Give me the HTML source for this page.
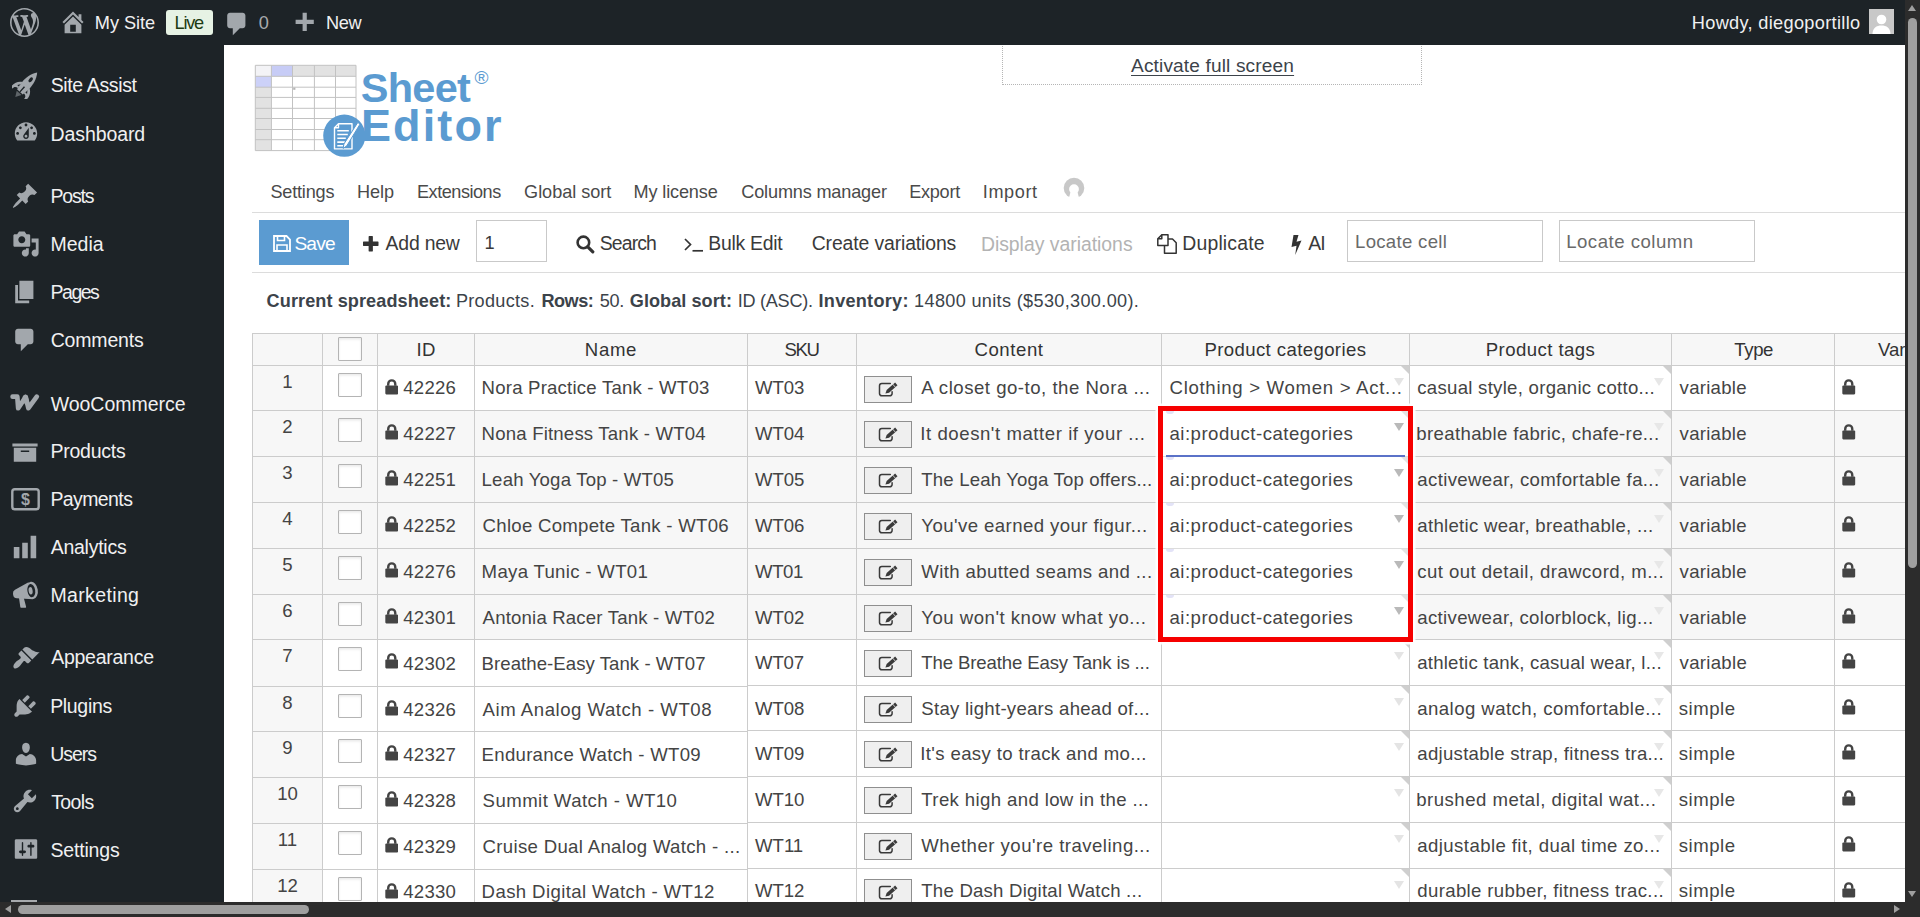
<!DOCTYPE html><html lang="en"><head><meta charset="utf-8"><title>Sheet Editor - Products</title><style>

*{box-sizing:border-box}
html,body{margin:0;padding:0}
body{width:1920px;height:917px;overflow:hidden;position:relative;background:#fff;font-family:"Liberation Sans",sans-serif;color:#444}
.ic{position:absolute;display:block}
.abs{position:absolute;white-space:nowrap}
a.abs{color:inherit}
#adminbar{position:absolute;left:0;top:0;width:1905px;height:45px;background:#1d2327;color:#f0f0f1}
#sidebar{position:absolute;left:0;top:45px;width:224px;height:857px;background:#1d2327;color:#f0f0f1;overflow:hidden}
#sidebar ul{list-style:none;margin:0;padding:0}
#sidebar li{display:block}
#main{position:absolute;left:224px;top:45px;width:1681px;height:857px;background:#fff;overflow:hidden}
#vs{position:absolute;left:1905px;top:0;width:15px;height:917px;background:#2c2c2c}
#hs{position:absolute;left:0;top:902px;width:1905px;height:15px;background:#2c2c2c}
#vs i,#hs i{display:block}


.c{position:absolute;border-left:1px solid #cccccc;border-top:1px solid #cccccc;overflow:hidden;white-space:nowrap}
.c.h{background:#f7f7f7}
.cb{position:absolute;display:block;width:24px;height:23.500px;border:1px solid #b4b4b4;background:#fff;border-radius:1px;box-shadow:inset 0 1.500px 2.500px rgba(0,0,0,.09)}
.btn{position:absolute;display:block;width:48px;height:27px;border:1px solid #8f8f8f;background:#efefef}
.dd{position:absolute;right:5.500px;top:11.500px;width:0;height:0;border-left:5.700px solid transparent;border-right:5.700px solid transparent;border-top:8.800px solid #ccc}
.lav{position:absolute;left:4px;top:0;width:8px;height:3px;background:#e3e3f7;border-radius:0 0 4px 4px}
.cn{position:absolute;right:0;top:0;width:0;height:0;border-left:8px solid transparent;border-top:8px solid #cfcfcf}

</style></head><body>
<div id="adminbar"><svg class="ic" style="left:9.5px;top:7.5px" width="29" height="29" viewBox="0 0 20 20" fill="#a2a7ac"><path d="M20 10c0-5.51-4.49-10-10-10C4.48 0 0 4.49 0 10c0 5.52 4.48 10 10 10 5.51 0 10-4.48 10-10zM7.78 15.37L4.37 6.22c.55-.02 1.17-.08 1.17-.08.5-.06.44-1.13-.06-1.11 0 0-1.45.11-2.37.11-.18 0-.37 0-.58-.01C4.12 2.69 6.87 1.11 10 1.11c2.33 0 4.45.87 6.05 2.34-.68-.11-1.65.39-1.65 1.58 0 .74.45 1.36.9 2.1.35.61.55 1.36.55 2.46 0 1.49-1.4 5-1.4 5l-3.03-8.37c.54-.02.82-.17.82-.17.5-.05.44-1.25-.06-1.22 0 0-1.44.12-2.38.12-.87 0-2.33-.12-2.33-.12-.5-.03-.56 1.2-.06 1.22l.92.08 1.26 3.41zM17.41 10c.24-.64.74-1.87.43-4.25.7 1.29 1.05 2.71 1.05 4.25 0 3.29-1.73 6.24-4.4 7.78.97-2.59 1.94-5.2 2.92-7.78zM6.1 18.09C3.12 16.65 1.11 13.53 1.11 10c0-1.3.23-2.48.72-3.59C3.25 10.3 4.67 14.2 6.1 18.09zm4.03-6.63l2.58 6.98c-.86.29-1.76.45-2.71.45-.79 0-1.57-.11-2.29-.33.81-2.38 1.62-4.74 2.42-7.1z"/></svg><svg class="ic" style="left:58.5px;top:8px" width="28" height="28" viewBox="0 0 20 20" fill="#a2a7ac"><path d="M16 8.5l1.53 1.53-1.06 1.06L10 4.62l-6.47 6.47-1.06-1.06L10 2.5l4 4v-2h2v4zm-6-2.46l6 5.99V18H4v-5.97zM12 17v-5H8v5h4z"/></svg><span class="abs" style="left:94.80px;top:13.79px;font-size:18.2px;line-height:18.2px;letter-spacing:-0.054px">My Site</span><span class="abs" style="left:166px;top:10px;height:25px;width:47px;background:#e6f2e4;border-radius:3px"></span><span class="abs" style="left:174.60px;top:13.79px;font-size:18.2px;line-height:18.2px;color:#1d3b12;letter-spacing:-1.283px">Live</span><svg class="ic" style="left:222.5px;top:10px" width="28" height="28" viewBox="0 0 20 20" fill="#a2a7ac"><path d="M5 2h9c1.1 0 2 .9 2 2v7c0 1.1-.9 2-2 2h-2l-5 5v-5H5c-1.1 0-2-.9-2-2V4c0-1.1.9-2 2-2z"/></svg><span class="abs" style="left:258.80px;top:13.79px;font-size:18.2px;line-height:18.2px;color:#a7aaad">0</span><svg class="ic" style="left:289.5px;top:9.5px" width="28" height="28" viewBox="0 0 20 20" fill="#a2a7ac"><path d="M17 7v3h-5v5H9v-5H4V7h5V2h3v5h5z"/></svg><span class="abs" style="left:326.00px;top:13.79px;font-size:18.2px;line-height:18.2px;letter-spacing:-0.375px">New</span><span class="abs" style="left:1691.80px;top:13.79px;font-size:18.2px;line-height:18.2px;letter-spacing:0.310px">Howdy, diegoportillo</span><svg class="ic" style="left:1869px;top:9px" width="25" height="25" viewBox="0 0 25 25"><rect width="25" height="25" fill="#c8c8c8"/><circle cx="12.500" cy="10.500" r="4.800" fill="#fff"/><path d="M3.500 25c0-6 4-8.500 9-8.500s9 2.500 9 8.500z" fill="#fff"/></svg></div>
<div id="sidebar"><ul><li><svg class="ic" style="left:11.5px;top:26.1px" width="28" height="28" viewBox="-14 -14 28 28" fill="#a2a7ac"><g transform="translate(.6,-.6) rotate(41.800) scale(1.060)"><path d="M0-15C3.500-10.500 5-4 4.600 2L3.600 9.500h-7.200L-4.600 2C-5-4-3.500-10.500 0-15z"/><path d="M-4.300 .8C-8.600 3-10.200 7.800-9.400 12.600l2-.8c-.2-2.300 1.200-3.700 3.800-3.800z"/><path d="M4.300 .8C8.600 3 10.200 7.800 9.400 12.600l-2-.8c.2-2.300-1.200-3.700-3.800-3.800z"/><ellipse cx="0" cy="-5.800" rx="1.500" ry="2.700" fill="#1d2327"/><path d="M0 3v6.500" stroke="#1d2327" stroke-width="1.300"/><path d="M-6.200 6.200l1.900-2.600v3z M6.200 6.200l-1.900-2.600v3z" fill="#1d2327"/><path d="M-3 10.600h6L0 16z" opacity=".5"/></g></svg><span class="abs" style="left:50.70px;top:31.09px;font-size:19.5px;line-height:19.5px;letter-spacing:-0.371px">Site Assist</span></li><li><svg class="ic" style="left:11.8px;top:73.2px" width="28" height="28" viewBox="0 0 20 20" fill="#a2a7ac"><path d="M3.76 16h12.48c1.1-1.37 1.76-3.11 1.76-5 0-4.42-3.58-8-8-8s-8 3.58-8 8c0 1.89.66 3.63 1.76 5zM10 4c.55 0 1 .45 1 1s-.45 1-1 1-1-.45-1-1 .45-1 1-1zM6 6c.55 0 1 .45 1 1s-.45 1-1 1-1-.45-1-1 .45-1 1-1zm8 0c.55 0 1 .45 1 1s-.45 1-1 1-1-.45-1-1 .45-1 1-1zm-5.37 5.55L12 7v6c0 1.1-.9 2-2 2s-2-.9-2-2c0-.57.24-1.08.63-1.450zM4 10c.55 0 1 .45 1 1s-.45 1-1 1-1-.45-1-1 .45-1 1-1zm12 0c.55 0 1 .45 1 1s-.45 1-1 1-1-.45-1-1 .45-1 1-1zm-5 3c0-.55-.45-1-1-1s-1 .45-1 1 .45 1 1 1 1-.45 1-1z"/></svg><span class="abs" style="left:50.50px;top:80.49px;font-size:19.5px;line-height:19.5px;letter-spacing:-0.094px">Dashboard</span></li><li><svg class="ic" style="left:11.1px;top:136.8px" width="28" height="28" viewBox="0 0 20 20" fill="#a2a7ac"><path d="M10.44 3.02l1.82-1.82 6.36 6.35-1.83 1.82c-1.05-.68-2.48-.57-3.41.36l-.75.75c-.92.93-1.04 2.35-.35 3.41l-1.83 1.82-2.41-2.41-2.8 2.79c-.42.42-3.38 2.71-3.8 2.29s1.86-3.39 2.28-3.81l2.79-2.79L4.1 9.36l1.83-1.82c1.05.69 2.48.57 3.4-.36l.75-.75c.93-.92 1.05-2.35.36-3.41z"/></svg><span class="abs" style="left:50.50px;top:142.19px;font-size:19.5px;line-height:19.5px;letter-spacing:-1.180px">Posts</span></li><li><svg class="ic" style="left:11.6px;top:184.8px" width="28" height="28" viewBox="0 0 20 20" fill="#a2a7ac"><path d="M13 11V4c0-.55-.45-1-1-1h-1.67L9 1H5L3.67 3H2c-.55 0-1 .45-1 1v7c0 .55.45 1 1 1h10c.55 0 1-.45 1-1zM7 4.5c1.38 0 2.5 1.12 2.5 2.5S8.38 9.5 7 9.5 4.5 8.38 4.5 7 5.62 4.5 7 4.5zM14 6h5v10.5c0 1.38-1.12 2.5-2.5 2.5S14 17.88 14 16.5s1.12-2.5 2.5-2.5c.17 0 .34.02.5.05V9h-3V6zm-4 8.05V13h2v3.500c0 1.38-1.12 2.5-2.5 2.5S7 17.88 7 16.5 8.12 14 9.5 14c.17 0 .34.02.5.05z"/></svg><span class="abs" style="left:50.50px;top:189.89px;font-size:19.5px;line-height:19.5px;letter-spacing:-0.016px">Media</span></li><li><svg class="ic" style="left:11.0px;top:233.4px" width="28" height="28" viewBox="0 0 20 20" fill="#a2a7ac"><path d="M6 15V2h10v13H6zm-1 1h8v2H3V5h2v11z"/></svg><span class="abs" style="left:50.50px;top:237.59px;font-size:19.5px;line-height:19.5px;letter-spacing:-1.485px">Pages</span></li><li><svg class="ic" style="left:10.9px;top:281.1px" width="28" height="28" viewBox="0 0 20 20" fill="#a2a7ac"><path d="M5 2h9c1.1 0 2 .9 2 2v7c0 1.1-.9 2-2 2h-2l-5 5v-5H5c-1.1 0-2-.9-2-2V4c0-1.1.9-2 2-2z"/></svg><span class="abs" style="left:50.70px;top:286.29px;font-size:19.5px;line-height:19.5px;letter-spacing:-0.175px">Comments</span></li><li><svg class="ic" style="left:8px;top:345px" width="34" height="26" viewBox="8 390 34 26" fill="none" stroke="#a2a7ac" stroke-width="4.700" stroke-linejoin="round" stroke-linecap="round"><path d="M12.600 396.700h4.700l.9 11.500 7.500-11.300 2.700 11.300 8.400-11.500"/><path d="M25.300 397.500l1.300 4.500" stroke-width="5.200"/></svg><span class="abs" style="left:50.70px;top:350.49px;font-size:19.5px;line-height:19.5px;letter-spacing:-0.025px">WooCommerce</span></li><li><svg class="ic" style="left:11.0px;top:392.5px" width="28" height="28" viewBox="0 0 20 20" fill="#a2a7ac"><path d="M19 4v2H1V4h18zM2 7h16v10H2V7zm11 3V9H7v1h6z"/></svg><span class="abs" style="left:50.40px;top:396.59px;font-size:19.5px;line-height:19.5px;letter-spacing:-0.229px">Products</span></li><li><svg class="ic" style="left:10.5px;top:442.5px" width="29" height="23" viewBox="0 0 29 23"><rect x="1.300" y="1.300" width="26.400" height="20" rx="2.500" fill="none" stroke="#a2a7ac" stroke-width="2.400"/><text x="14.500" y="16.800" font-family="Liberation Sans, sans-serif" font-weight="bold" font-size="16" text-anchor="middle" fill="#a2a7ac">$</text></svg><span class="abs" style="left:50.40px;top:445.29px;font-size:19.5px;line-height:19.5px;letter-spacing:-0.593px">Payments</span></li><li><svg class="ic" style="left:11.1px;top:487.8px" width="28" height="28" viewBox="0 0 20 20" fill="#a2a7ac"><path d="M18 18V2h-4v16h4zm-6 0V7H8v11h4zm-6 0v-8H2v8h4z"/></svg><span class="abs" style="left:50.70px;top:493.39px;font-size:19.5px;line-height:19.5px;letter-spacing:-0.260px">Analytics</span></li><li><svg class="ic" style="left:5px;top:530px" width="40" height="40" viewBox="5 575 40 40" fill="#a2a7ac"><path d="M19 598l1.300 9.100a.8.800 0 0 0 .8.700h4.200a.8.800 0 0 0 .8-1l-2.300-8.800z"/><path d="M28.500 582.300L15 589.800a4 4 0 0 0-2 4.200l.3 1.600a3.500 3.500 0 0 0 3.400 2.700l16.300.9z"/><ellipse cx="32.100" cy="590.400" rx="5.700" ry="8.700" transform="rotate(-9 32.100 590.400)"/><ellipse cx="31.300" cy="590.600" rx="3.900" ry="6.600" transform="rotate(-9 31.300 590.600)" fill="#1d2327"/><ellipse cx="30.600" cy="590.800" rx="2" ry="3.700" transform="rotate(-9 30.600 590.800)"/></svg><span class="abs" style="left:50.40px;top:541.49px;font-size:19.5px;line-height:19.5px;letter-spacing:0.366px">Marketing</span></li><li><svg class="ic" style="left:11.6px;top:598.9px" width="28" height="28" viewBox="0 0 20 20" fill="#a2a7ac"><path d="M14.48 11.06L7.41 3.99l1.5-1.5c.5-.56 2.3-.47 3.51.32 1.21.8 1.43 1.28 2.91 2.1 1.18.64 2.45 1.26 4.45.85zm-.71.71L6.7 4.7 4.93 6.47c-.39.39-.39 1.02 0 1.41l1.06 1.06c.39.39.39 1.03 0 1.42-.6.6-1.43 1.11-2.21 1.69-.35.26-.7.53-1.01.84C1.43 14.23.4 16.08 1.4 17.070c.99 1 2.84-.03 4.18-1.36.31-.31.58-.66.85-1.02.57-.78 1.08-1.61 1.69-2.21.39-.39 1.02-.39 1.41 0l1.060 1.060c.39.39 1.02.39 1.41 0z"/></svg><span class="abs" style="left:51.20px;top:603.19px;font-size:19.5px;line-height:19.5px;letter-spacing:-0.258px">Appearance</span></li><li><svg class="ic" style="left:11.1px;top:647.2px" width="28" height="28" viewBox="0 0 20 20" fill="#a2a7ac"><path d="M13.11 4.36L9.87 7.6 8 5.73l3.240-3.240c.35-.34 1.05-.2 1.56.32.52.51.66 1.21.31 1.55zm-8 1.77l.91-1.12 9.01 9.01-1.19.84c-.71.71-2.63 1.16-3.82 1.16H6.14L4.9 17.26c-.59.59-1.54.59-2.12 0-.59-.58-.59-1.53 0-2.12l1.24-1.24v-3.88c0-1.13.4-3.19 1.09-3.890zm7.26 3.97l3.24-3.24c.34-.35 1.04-.21 1.55.31.52.51.66 1.21.31 1.55l-3.24 3.25z"/></svg><span class="abs" style="left:50.20px;top:652.49px;font-size:19.5px;line-height:19.5px;letter-spacing:-0.334px">Plugins</span></li><li><svg class="ic" style="left:11.6px;top:694.8px" width="28" height="28" viewBox="0 0 20 20" fill="#a2a7ac"><path d="M10 9.25c-2.27 0-2.73-3.44-2.73-3.44C7 4.02 7.82 2 9.97 2c2.16 0 2.98 2.02 2.71 3.81 0 0-.41 3.44-2.68 3.44zm0 2.57L12.72 10c2.39 0 4.52 2.33 4.52 4.53v2.49s-3.65 1.13-7.24 1.13c-3.65 0-7.24-1.13-7.24-1.13v-2.49c0-2.25 1.94-4.48 4.47-4.48z"/></svg><span class="abs" style="left:50.20px;top:700.39px;font-size:19.5px;line-height:19.5px;letter-spacing:-1.043px">Users</span></li><li><svg class="ic" style="left:11.4px;top:742.4px" width="28" height="28" viewBox="0 0 20 20" fill="#a2a7ac"><path d="M16.68 9.77c-1.34 1.34-3.3 1.67-4.95.99l-5.41 6.52c-.99.99-2.59.99-3.58 0s-.99-2.59 0-3.57l6.52-5.42c-.68-1.65-.35-3.61.99-4.95 1.28-1.28 3.12-1.62 4.72-1.06l-2.89 2.89 2.82 2.82 2.86-2.87c.53 1.58.18 3.39-1.08 4.650zM3.81 16.21c.4.39 1.04.39 1.43 0 .4-.4.4-1.04 0-1.43-.39-.4-1.03-.4-1.43 0-.39.39-.39 1.03 0 1.43z"/></svg><span class="abs" style="left:51.20px;top:748.39px;font-size:19.5px;line-height:19.5px;letter-spacing:-0.593px">Tools</span></li><li><svg class="ic" style="left:11.9px;top:790.1px" width="28" height="28" viewBox="0 0 20 20" fill="#a2a7ac"><path d="M18 16V4c0-.55-.45-1-1-1H3c-.55 0-1 .45-1 1v12c0 .55.45 1 1 1h14c.55 0 1-.45 1-1zM8 11h1c.55 0 1 .45 1 1s-.45 1-1 1H8v1.5c0 .28-.22.5-.5.5s-.5-.22-.5-.5V13H6c-.55 0-1-.45-1-1s.45-1 1-1h1V5.5c0-.28.22-.5.5-.5s.5.22.5.5V11zm5-2h-1c-.55 0-1-.45-1-1s.45-1 1-1h1V5.5c0-.28.22-.5.5-.5s.5.22.5.5V7h1c.55 0 1 .45 1 1s-.45 1-1 1h-1v5.5c0 .28-.22.5-.5.5s-.5-.22-.5-.5V9z"/></svg><span class="abs" style="left:50.40px;top:795.59px;font-size:19.5px;line-height:19.5px;letter-spacing:-0.158px">Settings</span></li></ul><div class="abs" style="left:11.300px;top:854.500px;width:25.500px;height:2.500px;background:#a7aaad"></div></div>
<div id="main">
<svg class="ic" style="left:26px;top:15px" width="120" height="100" viewBox="0 0 120 100" stroke="#c2c2c2" stroke-width="1"><rect x="5.3" y="5.3" width="100.70" height="85.30" fill="#fff" stroke="none"/><rect x="5.3" y="5.3" width="100.70" height="11.00" fill="#e2e2e2" stroke="none"/><rect x="5.3" y="5.3" width="16.10" height="85.30" fill="#e2e2e2" stroke="none"/><rect x="5.3" y="5.3" width="16.10" height="11.00" fill="#f3f3f6" stroke="none"/><rect x="21.4" y="5.3" width="21.10" height="11.00" fill="#c7ccf6" stroke="none"/><rect x="5.3" y="16.3" width="16.10" height="10.90" fill="#ccd1f8" stroke="none"/><line x1="5.3" y1="5.3" x2="5.3" y2="90.6"/><line x1="21.4" y1="5.3" x2="21.4" y2="90.6"/><line x1="42.5" y1="5.3" x2="42.5" y2="90.6"/><line x1="64.4" y1="5.3" x2="64.4" y2="90.6"/><line x1="85.5" y1="5.3" x2="85.5" y2="90.6"/><line x1="106.0" y1="5.3" x2="106.0" y2="90.6"/><line x1="5.3" y1="5.3" x2="106.0" y2="5.3"/><line x1="5.3" y1="16.3" x2="106.0" y2="16.3"/><line x1="5.3" y1="27.2" x2="106.0" y2="27.2"/><line x1="5.3" y1="37.4" x2="106.0" y2="37.4"/><line x1="5.3" y1="48.3" x2="106.0" y2="48.3"/><line x1="5.3" y1="58.5" x2="106.0" y2="58.5"/><line x1="5.3" y1="69.5" x2="106.0" y2="69.5"/><line x1="5.3" y1="79.7" x2="106.0" y2="79.7"/><line x1="5.3" y1="90.6" x2="106.0" y2="90.6"/><rect x="43.2" y="27.6" width="2.200" height="2.200" fill="#b5b5b5" stroke="none"/><circle cx="94.3" cy="75.7" r="21.1" fill="#5b9bd1" stroke="none"/><g transform="translate(94.3,76.3)" fill="none" stroke="#fff" stroke-width="1.400" stroke-linejoin="round"><path d="M-5.800 -12.600h13.500v25.200h-17.500v-21.200z" fill="#5b9bd1"/><path d="M-5.800 -12.600v4h-4"/><path d="M-7 -5.600h11.500M-7 -1.800h10.500M-7 2h8.500M-7 5.800h7.500M-7 9.400h6" stroke-width="1.600"/><path d="M13.500 -13.800l2.300 1.500-13.300 21.800-3.600 2.600.7-4.400z" fill="#fff" stroke="#5b9bd1" stroke-width="1"/></g></svg><span class="abs" style="left:136.80px;top:22.37px;font-size:41.5px;line-height:41.5px;color:#5b9bd1;font-weight:bold;letter-spacing:-0.748px">Sheet</span><span class="abs" style="left:137.00px;top:58.01px;font-size:45px;line-height:45px;color:#5b9bd1;font-weight:bold;letter-spacing:2.104px">Editor</span><span class="abs" style="left:250.40px;top:23.32px;font-size:19px;line-height:19px;color:#5b9bd1;letter-spacing:0.000px">®</span><div class="abs" style="left:778.0px;top:-5.0px;width:419.5px;height:44.5px;border:1px dotted #b5b5b5"></div><a class="abs" style="left:907.00px;top:11.03px;font-size:19.1px;line-height:19.1px;color:#3c434a;letter-spacing:0.141px;text-decoration:underline;text-decoration-thickness:1px;text-underline-offset:2.500px">Activate full screen</a><span class="abs" style="left:46.50px;top:137.68px;font-size:18.1px;line-height:18.1px;color:#4a4a4a;letter-spacing:-0.204px">Settings</span><span class="abs" style="left:133.00px;top:137.68px;font-size:18.1px;line-height:18.1px;color:#4a4a4a;letter-spacing:-0.050px">Help</span><span class="abs" style="left:193.00px;top:137.68px;font-size:18.1px;line-height:18.1px;color:#4a4a4a;letter-spacing:-0.473px">Extensions</span><span class="abs" style="left:300.10px;top:137.68px;font-size:18.1px;line-height:18.1px;color:#4a4a4a;letter-spacing:-0.036px">Global sort</span><span class="abs" style="left:409.60px;top:137.68px;font-size:18.1px;line-height:18.1px;color:#4a4a4a;letter-spacing:-0.145px">My license</span><span class="abs" style="left:517.30px;top:137.68px;font-size:18.1px;line-height:18.1px;color:#4a4a4a;letter-spacing:-0.158px">Columns manager</span><span class="abs" style="left:685.20px;top:137.68px;font-size:18.1px;line-height:18.1px;color:#4a4a4a;letter-spacing:-0.253px">Export</span><span class="abs" style="left:758.80px;top:137.68px;font-size:18.1px;line-height:18.1px;color:#4a4a4a;letter-spacing:0.590px">Import</span><svg class="ic" style="left:838.5px;top:131.6px" width="22" height="22" viewBox="-11 -11 22 22"><clipPath id="spc"><rect x="-11" y="-11" width="22" height="19.800"/></clipPath><circle r="10.300" fill="#c8c8c8" clip-path="url(#spc)"/><circle cy="1.100" r="4.900" fill="#fff"/><path d="M-3.600 4.200L-5.200 11h10.400L3.600 4.200z" fill="#fff"/></svg><div class="abs" style="left:27.5px;top:167.0px;width:1654.0px;height:1.0px;background:#dcdcdc"></div><div class="abs" style="left:27.5px;top:227.0px;width:1654.0px;height:1.0px;background:#dcdcdc"></div><div class="abs" style="left:35.0px;top:175.0px;width:90.0px;height:44.8px;background:#5b9bd1"></div><svg class="ic" style="left:48.5px;top:190px" width="18" height="17" viewBox="0 0 18 17" fill="none" stroke="#fff" stroke-width="1.800"><path d="M1 1h12.500l3.500 3.500v11.500h-16z"/><path d="M4.500 1v4.500h7v-4.500" stroke-width="1.600"/><path d="M4 16v-6h10v6" stroke-width="1.600"/></svg><span class="abs" style="left:70.40px;top:189.35px;font-size:19.2px;line-height:19.2px;color:#fff;letter-spacing:-0.854px">Save</span><svg class="ic" style="left:139.3px;top:191px" width="15.500" height="15.500" viewBox="0 0 16 16" fill="#333"><path d="M5.800 .5a.5.500 0 0 1 .5-.5h3.400a.5.500 0 0 1 .5.500v5.300h5.300a.5.500 0 0 1 .5.500v3.400a.5.500 0 0 1-.5.500h-5.300v5.300a.5.500 0 0 1-.5.500h-3.400a.5.500 0 0 1-.5-.5v-5.300h-5.300a.5.500 0 0 1-.5-.5v-3.400a.5.500 0 0 1 .5-.5h5.300z"/></svg><span class="abs" style="left:161.60px;top:189.18px;font-size:19.4px;line-height:19.4px;color:#3a3a3a;letter-spacing:-0.210px">Add new</span><div class="abs" style="left:252.0px;top:175.4px;width:70.6px;height:41.3px;border:1px solid #c9c9c9;background:#fff"></div><span class="abs" style="left:260.40px;top:189.09px;font-size:18.2px;line-height:18.2px;color:#3a3a3a">1</span><svg class="ic" style="left:351.5px;top:190px" width="19" height="19" viewBox="0 0 19 19" fill="none" stroke="#333" stroke-width="2.600"><circle cx="7.400" cy="7.400" r="5.800"/><path d="M11.800 11.800l5 5" stroke-width="3.200" stroke-linecap="round"/></svg><span class="abs" style="left:375.80px;top:189.18px;font-size:19.4px;line-height:19.4px;color:#3a3a3a;letter-spacing:-0.891px">Search</span><svg class="ic" style="left:460px;top:193px" width="20" height="14" viewBox="0 0 20 14" fill="none" stroke="#333" stroke-width="1.700"><path d="M1 1l5.500 5.500-5.500 5.500"/><path d="M8.500 12.800h10.500"/></svg><span class="abs" style="left:484.30px;top:189.18px;font-size:19.4px;line-height:19.4px;color:#3a3a3a;letter-spacing:-0.267px">Bulk Edit</span><span class="abs" style="left:587.70px;top:189.18px;font-size:19.4px;line-height:19.4px;color:#3a3a3a;letter-spacing:-0.124px">Create variations</span><span class="abs" style="left:756.90px;top:190.38px;font-size:19.4px;line-height:19.4px;color:#b3b3b3;letter-spacing:-0.015px">Display variations</span><svg class="ic" style="left:933px;top:188.8px" width="20" height="20" viewBox="0 0 20 20" fill="#fff" stroke="#333" stroke-width="1.500" stroke-linejoin="round"><path d="M7.500 5h8l3.700 3.700v10.500h-11.700z"/><path d="M.800 4.800l4-4h6.200v10.700h-10.200z"/><path d="M.800 4.800h4v-4" fill="none"/></svg><span class="abs" style="left:958.30px;top:189.18px;font-size:19.4px;line-height:19.4px;color:#3a3a3a;letter-spacing:0.174px">Duplicate</span><svg class="ic" style="left:1067px;top:189.6px" width="11" height="20" viewBox="0 0 11 20" fill="#333"><path d="M2.500 0h5l-2 6.800 5-1.200-6.300 14.400 1.300-9.300-5 1.200z"/></svg><span class="abs" style="left:1084.30px;top:189.18px;font-size:19.4px;line-height:19.4px;color:#3a3a3a;letter-spacing:-1.033px">AI</span><div class="abs" style="left:1123.3px;top:175.4px;width:196.0px;height:41.3px;border:1px solid #c9c9c9;background:#fff"></div><span class="abs" style="left:1131.00px;top:187.76px;font-size:18.6px;line-height:18.6px;color:#6a6a6a;letter-spacing:0.294px">Locate cell</span><div class="abs" style="left:1335.0px;top:175.4px;width:195.6px;height:41.3px;border:1px solid #c9c9c9;background:#fff"></div><span class="abs" style="left:1342.20px;top:187.76px;font-size:18.6px;line-height:18.6px;color:#6a6a6a;letter-spacing:0.501px">Locate column</span><div id="status"><b class="abs" style="left:42.60px;top:247.18px;font-size:18.1px;line-height:18.1px;color:#3c434a;font-weight:bold;letter-spacing:0.091px">Current spreadsheet:</b><span class="abs" style="left:231.90px;top:247.18px;font-size:18.1px;line-height:18.1px;color:#3c434a;letter-spacing:0.300px">Products.</span><b class="abs" style="left:317.40px;top:247.18px;font-size:18.1px;line-height:18.1px;color:#3c434a;font-weight:bold;letter-spacing:-0.464px">Rows:</b><span class="abs" style="left:375.80px;top:247.18px;font-size:18.1px;line-height:18.1px;color:#3c434a;letter-spacing:-0.313px">50.</span><b class="abs" style="left:405.80px;top:247.18px;font-size:18.1px;line-height:18.1px;color:#3c434a;font-weight:bold;letter-spacing:0.054px">Global sort:</b><span class="abs" style="left:513.70px;top:247.18px;font-size:18.1px;line-height:18.1px;color:#3c434a;letter-spacing:-0.259px">ID (ASC).</span><b class="abs" style="left:594.50px;top:247.18px;font-size:18.1px;line-height:18.1px;color:#3c434a;font-weight:bold;letter-spacing:0.273px">Inventory:</b><span class="abs" style="left:690.10px;top:247.18px;font-size:18.1px;line-height:18.1px;color:#3c434a;letter-spacing:0.338px">14800 units ($530,300.00).</span></div>
<div id="grid"><div class="c h" style="left:28px;top:288px;width:70px;height:32px;"></div><div class="c h" style="left:98px;top:288px;width:55px;height:32px;"><i class="cb" style="left:15px;top:3px"></i></div><div class="c h" style="left:153px;top:288px;width:97px;height:32px;"><span class="abs" style="left:38.40px;top:7.16px;font-size:18.6px;line-height:18.6px;color:#333;letter-spacing:0.334px">ID</span></div><div class="c h" style="left:250px;top:288px;width:273px;height:32px;"><span class="abs" style="left:109.80px;top:7.16px;font-size:18.6px;line-height:18.6px;color:#333;letter-spacing:0.681px">Name</span></div><div class="c h" style="left:523px;top:288px;width:109px;height:32px;"><span class="abs" style="left:36.50px;top:7.16px;font-size:18.6px;line-height:18.6px;color:#333;letter-spacing:-1.452px">SKU</span></div><div class="c h" style="left:632px;top:288px;width:305px;height:32px;"><span class="abs" style="left:117.40px;top:7.16px;font-size:18.6px;line-height:18.6px;color:#333;letter-spacing:0.574px">Content</span></div><div class="c h" style="left:937px;top:288px;width:248px;height:32px;"><span class="abs" style="left:42.40px;top:7.16px;font-size:18.6px;line-height:18.6px;color:#333;letter-spacing:0.386px">Product categories</span></div><div class="c h" style="left:1185px;top:288px;width:262px;height:32px;"><span class="abs" style="left:75.70px;top:7.16px;font-size:18.6px;line-height:18.6px;color:#333;letter-spacing:0.437px">Product tags</span></div><div class="c h" style="left:1447px;top:288px;width:163px;height:32px;"><span class="abs" style="left:62.30px;top:7.16px;font-size:18.6px;line-height:18.6px;color:#333;letter-spacing:-0.390px">Type</span></div><div class="c h" style="left:1610px;top:288px;width:176px;height:32px;"><span class="abs" style="left:42.90px;top:7.16px;font-size:18.6px;line-height:18.6px;color:#333">Variations</span></div><div class="c h" style="left:28px;top:320px;width:70px;height:45px;"><span class="abs" style="left:0;width:69px;text-align:center;top:6.7px;font-size:18.6px;line-height:18.6px;color:#444">1</span></div><div class="c" style="left:98px;top:320px;width:55px;height:45px;"><i class="cb" style="left:15px;top:7px"></i></div><div class="c" style="left:153px;top:320px;width:97px;height:45px;"><svg class="ic" style="left:6.8px;top:13.2px" width="13.500" height="15.600" viewBox="0 0 13 15"><path d="M3.100 6.500V4.700a3.400 3.400 0 0 1 6.800 0v1.800" fill="none" stroke="#444" stroke-width="2.300"/><rect x="0.300" y="6.300" width="12.400" height="8.500" rx="1" fill="#444"/></svg><span class="abs" style="left:25.20px;top:12.66px;font-size:18.6px;line-height:18.6px;color:#444;letter-spacing:0.259px">42226</span></div><div class="c" style="left:250px;top:320px;width:273px;height:45px;"><span class="abs" style="left:6.60px;top:12.66px;font-size:18.6px;line-height:18.6px;color:#444;letter-spacing:0.202px">Nora Practice Tank - WT03</span></div><div class="c" style="left:523px;top:320px;width:109px;height:45px;"><span class="abs" style="left:7.10px;top:12.66px;font-size:18.6px;line-height:18.6px;color:#444;letter-spacing:-0.116px">WT03</span></div><div class="c" style="left:632px;top:320px;width:305px;height:45px;"><span class="btn" style="left:7px;top:10px"><svg class="ic" style="left:-1px;top:-1px" width="48" height="27" viewBox="0 0 48 27" fill="none" stroke="#3a3a3a" stroke-width="1.500" stroke-linecap="round"><path d="M26.300 7.400H17.800a2.300 2.300 0 0 0-2.300 2.300v7.800a2.300 2.300 0 0 0 2.300 2.300h8a2.300 2.300 0 0 0 2.300-2.300V15.800"/><path d="M21.400 17.600L22.650 13.960 31.100 6.450 33.500 9.150 25.040 16.650z" fill="#3a3a3a" stroke="none"/><path d="M28.900 8.400l2.400 2.700" stroke="#efefef" stroke-width=".8"/></svg></span><span class="abs" style="left:64.30px;top:12.66px;font-size:18.6px;line-height:18.6px;color:#444;letter-spacing:0.506px">A closet go-to, the Nora ...</span></div><div class="c" style="left:937px;top:320px;width:248px;height:45px;"><span class="abs" style="left:7.50px;top:12.66px;font-size:18.6px;line-height:18.6px;color:#444;letter-spacing:0.699px">Clothing &gt; Women &gt; Act...</span><i class="dd" style="border-top-color:#e4e4e4"></i><i class="cn"></i></div><div class="c" style="left:1185px;top:320px;width:262px;height:45px;"><span class="abs" style="left:7.30px;top:12.66px;font-size:18.6px;line-height:18.6px;color:#444;letter-spacing:0.270px">casual style, organic cotto...</span><i class="dd" style="border-top-color:#e7e7e7;right:7px"></i><i class="cn"></i></div><div class="c" style="left:1447px;top:320px;width:163px;height:45px;"><span class="abs" style="left:7.60px;top:12.66px;font-size:18.6px;line-height:18.6px;color:#444;letter-spacing:0.261px">variable</span></div><div class="c" style="left:1610px;top:320px;width:176px;height:45px;"><svg class="ic" style="left:7.3px;top:13.4px" width="13.500" height="15.600" viewBox="0 0 13 15"><path d="M3.100 6.500V4.700a3.400 3.400 0 0 1 6.800 0v1.800" fill="none" stroke="#444" stroke-width="2.300"/><rect x="0.300" y="6.300" width="12.400" height="8.500" rx="1" fill="#444"/></svg></div><div class="c h" style="left:28px;top:365px;width:70px;height:46px;"><span class="abs" style="left:0;width:69px;text-align:center;top:6.7px;font-size:18.6px;line-height:18.6px;color:#444">2</span></div><div class="c" style="left:98px;top:365px;width:55px;height:46px;background:#f7f7f7;"><i class="cb" style="left:15px;top:7px"></i></div><div class="c" style="left:153px;top:365px;width:97px;height:46px;background:#f7f7f7;"><svg class="ic" style="left:6.8px;top:13.2px" width="13.500" height="15.600" viewBox="0 0 13 15"><path d="M3.100 6.500V4.700a3.400 3.400 0 0 1 6.800 0v1.800" fill="none" stroke="#444" stroke-width="2.300"/><rect x="0.300" y="6.300" width="12.400" height="8.500" rx="1" fill="#444"/></svg><span class="abs" style="left:25.20px;top:14.26px;font-size:18.6px;line-height:18.6px;color:#444;letter-spacing:0.259px">42227</span></div><div class="c" style="left:250px;top:365px;width:273px;height:46px;background:#f7f7f7;"><span class="abs" style="left:6.60px;top:14.26px;font-size:18.6px;line-height:18.6px;color:#444;letter-spacing:0.184px">Nona Fitness Tank - WT04</span></div><div class="c" style="left:523px;top:365px;width:109px;height:46px;background:#f7f7f7;"><span class="abs" style="left:7.10px;top:14.26px;font-size:18.6px;line-height:18.6px;color:#444;letter-spacing:-0.116px">WT04</span></div><div class="c" style="left:632px;top:365px;width:305px;height:46px;background:#f7f7f7;"><span class="btn" style="left:7px;top:10px"><svg class="ic" style="left:-1px;top:-1px" width="48" height="27" viewBox="0 0 48 27" fill="none" stroke="#3a3a3a" stroke-width="1.500" stroke-linecap="round"><path d="M26.300 7.400H17.800a2.300 2.300 0 0 0-2.300 2.300v7.800a2.300 2.300 0 0 0 2.300 2.300h8a2.300 2.300 0 0 0 2.300-2.300V15.800"/><path d="M21.400 17.600L22.650 13.960 31.100 6.450 33.500 9.150 25.040 16.650z" fill="#3a3a3a" stroke="none"/><path d="M28.900 8.400l2.400 2.700" stroke="#efefef" stroke-width=".8"/></svg></span><span class="abs" style="left:63.30px;top:14.26px;font-size:18.6px;line-height:18.6px;color:#444;letter-spacing:0.552px">It doesn't matter if your ...</span></div><div class="c" style="left:937px;top:365px;width:248px;height:46px;background:#fff;border-top-color:#dcdcdc;"><span class="abs" style="left:7.50px;top:14.26px;font-size:18.6px;line-height:18.6px;color:#444;letter-spacing:0.483px">ai:product-categories</span><i class="dd" style="border-top-color:#b9b9b9"></i><i class="cn" style="border-top-color:#e3e3e3"></i><i class="lav"></i></div><div class="c" style="left:1185px;top:365px;width:262px;height:46px;background:#f7f7f7;"><span class="abs" style="left:6.30px;top:14.26px;font-size:18.6px;line-height:18.6px;color:#444;letter-spacing:0.352px">breathable fabric, chafe-re...</span><i class="dd" style="border-top-color:#e7e7e7;right:7px"></i><i class="cn"></i></div><div class="c" style="left:1447px;top:365px;width:163px;height:46px;background:#f7f7f7;"><span class="abs" style="left:7.60px;top:14.26px;font-size:18.6px;line-height:18.6px;color:#444;letter-spacing:0.261px">variable</span></div><div class="c" style="left:1610px;top:365px;width:176px;height:46px;background:#f7f7f7;"><svg class="ic" style="left:7.3px;top:13.4px" width="13.500" height="15.600" viewBox="0 0 13 15"><path d="M3.100 6.500V4.700a3.400 3.400 0 0 1 6.800 0v1.800" fill="none" stroke="#444" stroke-width="2.300"/><rect x="0.300" y="6.300" width="12.400" height="8.500" rx="1" fill="#444"/></svg></div><div class="c h" style="left:28px;top:411px;width:70px;height:46px;"><span class="abs" style="left:0;width:69px;text-align:center;top:6.7px;font-size:18.6px;line-height:18.6px;color:#444">3</span></div><div class="c" style="left:98px;top:411px;width:55px;height:46px;background:#f7f7f7;"><i class="cb" style="left:15px;top:7px"></i></div><div class="c" style="left:153px;top:411px;width:97px;height:46px;background:#f7f7f7;"><svg class="ic" style="left:6.8px;top:13.2px" width="13.500" height="15.600" viewBox="0 0 13 15"><path d="M3.100 6.500V4.700a3.400 3.400 0 0 1 6.800 0v1.800" fill="none" stroke="#444" stroke-width="2.300"/><rect x="0.300" y="6.300" width="12.400" height="8.500" rx="1" fill="#444"/></svg><span class="abs" style="left:25.20px;top:14.26px;font-size:18.6px;line-height:18.6px;color:#444;letter-spacing:0.259px">42251</span></div><div class="c" style="left:250px;top:411px;width:273px;height:46px;background:#f7f7f7;"><span class="abs" style="left:6.60px;top:14.26px;font-size:18.6px;line-height:18.6px;color:#444;letter-spacing:0.186px">Leah Yoga Top - WT05</span></div><div class="c" style="left:523px;top:411px;width:109px;height:46px;background:#f7f7f7;"><span class="abs" style="left:7.10px;top:14.26px;font-size:18.6px;line-height:18.6px;color:#444;letter-spacing:-0.116px">WT05</span></div><div class="c" style="left:632px;top:411px;width:305px;height:46px;background:#f7f7f7;"><span class="btn" style="left:7px;top:10px"><svg class="ic" style="left:-1px;top:-1px" width="48" height="27" viewBox="0 0 48 27" fill="none" stroke="#3a3a3a" stroke-width="1.500" stroke-linecap="round"><path d="M26.300 7.400H17.800a2.300 2.300 0 0 0-2.300 2.300v7.800a2.300 2.300 0 0 0 2.300 2.300h8a2.300 2.300 0 0 0 2.300-2.300V15.800"/><path d="M21.400 17.600L22.650 13.960 31.100 6.450 33.500 9.150 25.040 16.650z" fill="#3a3a3a" stroke="none"/><path d="M28.900 8.400l2.400 2.700" stroke="#efefef" stroke-width=".8"/></svg></span><span class="abs" style="left:64.30px;top:14.26px;font-size:18.6px;line-height:18.6px;color:#444;letter-spacing:0.163px">The Leah Yoga Top offers...</span></div><div class="c" style="left:937px;top:411px;width:248px;height:46px;background:#fff;border-top-color:#dcdcdc;"><span class="abs" style="left:7.50px;top:14.26px;font-size:18.6px;line-height:18.6px;color:#444;letter-spacing:0.483px">ai:product-categories</span><i class="dd" style="border-top-color:#b9b9b9"></i><i class="cn" style="border-top-color:#e3e3e3"></i><i class="lav"></i></div><div class="c" style="left:1185px;top:411px;width:262px;height:46px;background:#f7f7f7;"><span class="abs" style="left:7.30px;top:14.26px;font-size:18.6px;line-height:18.6px;color:#444;letter-spacing:0.367px">activewear, comfortable fa...</span><i class="dd" style="border-top-color:#e7e7e7;right:7px"></i><i class="cn"></i></div><div class="c" style="left:1447px;top:411px;width:163px;height:46px;background:#f7f7f7;"><span class="abs" style="left:7.60px;top:14.26px;font-size:18.6px;line-height:18.6px;color:#444;letter-spacing:0.261px">variable</span></div><div class="c" style="left:1610px;top:411px;width:176px;height:46px;background:#f7f7f7;"><svg class="ic" style="left:7.3px;top:13.4px" width="13.500" height="15.600" viewBox="0 0 13 15"><path d="M3.100 6.500V4.700a3.400 3.400 0 0 1 6.800 0v1.800" fill="none" stroke="#444" stroke-width="2.300"/><rect x="0.300" y="6.300" width="12.400" height="8.500" rx="1" fill="#444"/></svg></div><div class="c h" style="left:28px;top:457px;width:70px;height:46px;"><span class="abs" style="left:0;width:69px;text-align:center;top:6.7px;font-size:18.6px;line-height:18.6px;color:#444">4</span></div><div class="c" style="left:98px;top:457px;width:55px;height:46px;background:#f7f7f7;"><i class="cb" style="left:15px;top:7px"></i></div><div class="c" style="left:153px;top:457px;width:97px;height:46px;background:#f7f7f7;"><svg class="ic" style="left:6.8px;top:13.2px" width="13.500" height="15.600" viewBox="0 0 13 15"><path d="M3.100 6.500V4.700a3.400 3.400 0 0 1 6.800 0v1.800" fill="none" stroke="#444" stroke-width="2.300"/><rect x="0.300" y="6.300" width="12.400" height="8.500" rx="1" fill="#444"/></svg><span class="abs" style="left:25.20px;top:14.26px;font-size:18.6px;line-height:18.6px;color:#444;letter-spacing:0.259px">42252</span></div><div class="c" style="left:250px;top:457px;width:273px;height:46px;background:#f7f7f7;"><span class="abs" style="left:7.60px;top:14.26px;font-size:18.6px;line-height:18.6px;color:#444;letter-spacing:0.279px">Chloe Compete Tank - WT06</span></div><div class="c" style="left:523px;top:457px;width:109px;height:46px;background:#f7f7f7;"><span class="abs" style="left:7.10px;top:14.26px;font-size:18.6px;line-height:18.6px;color:#444;letter-spacing:-0.116px">WT06</span></div><div class="c" style="left:632px;top:457px;width:305px;height:46px;background:#f7f7f7;"><span class="btn" style="left:7px;top:10px"><svg class="ic" style="left:-1px;top:-1px" width="48" height="27" viewBox="0 0 48 27" fill="none" stroke="#3a3a3a" stroke-width="1.500" stroke-linecap="round"><path d="M26.300 7.400H17.800a2.300 2.300 0 0 0-2.300 2.300v7.800a2.300 2.300 0 0 0 2.300 2.300h8a2.300 2.300 0 0 0 2.300-2.300V15.800"/><path d="M21.400 17.600L22.650 13.960 31.100 6.450 33.500 9.150 25.040 16.650z" fill="#3a3a3a" stroke="none"/><path d="M28.900 8.400l2.400 2.700" stroke="#efefef" stroke-width=".8"/></svg></span><span class="abs" style="left:64.30px;top:14.26px;font-size:18.6px;line-height:18.6px;color:#444;letter-spacing:0.423px">You've earned your figur...</span></div><div class="c" style="left:937px;top:457px;width:248px;height:46px;background:#fff;border-top-color:#dcdcdc;"><span class="abs" style="left:7.50px;top:14.26px;font-size:18.6px;line-height:18.6px;color:#444;letter-spacing:0.483px">ai:product-categories</span><i class="dd" style="border-top-color:#b9b9b9"></i><i class="cn" style="border-top-color:#e3e3e3"></i><i class="lav"></i></div><div class="c" style="left:1185px;top:457px;width:262px;height:46px;background:#f7f7f7;"><span class="abs" style="left:7.30px;top:14.26px;font-size:18.6px;line-height:18.6px;color:#444;letter-spacing:0.289px">athletic wear, breathable, ...</span><i class="dd" style="border-top-color:#e7e7e7;right:7px"></i><i class="cn"></i></div><div class="c" style="left:1447px;top:457px;width:163px;height:46px;background:#f7f7f7;"><span class="abs" style="left:7.60px;top:14.26px;font-size:18.6px;line-height:18.6px;color:#444;letter-spacing:0.261px">variable</span></div><div class="c" style="left:1610px;top:457px;width:176px;height:46px;background:#f7f7f7;"><svg class="ic" style="left:7.3px;top:13.4px" width="13.500" height="15.600" viewBox="0 0 13 15"><path d="M3.100 6.500V4.700a3.400 3.400 0 0 1 6.800 0v1.800" fill="none" stroke="#444" stroke-width="2.300"/><rect x="0.300" y="6.300" width="12.400" height="8.500" rx="1" fill="#444"/></svg></div><div class="c h" style="left:28px;top:503px;width:70px;height:46px;"><span class="abs" style="left:0;width:69px;text-align:center;top:6.7px;font-size:18.6px;line-height:18.6px;color:#444">5</span></div><div class="c" style="left:98px;top:503px;width:55px;height:46px;background:#f7f7f7;"><i class="cb" style="left:15px;top:7px"></i></div><div class="c" style="left:153px;top:503px;width:97px;height:46px;background:#f7f7f7;"><svg class="ic" style="left:6.8px;top:13.2px" width="13.500" height="15.600" viewBox="0 0 13 15"><path d="M3.100 6.500V4.700a3.400 3.400 0 0 1 6.800 0v1.800" fill="none" stroke="#444" stroke-width="2.300"/><rect x="0.300" y="6.300" width="12.400" height="8.500" rx="1" fill="#444"/></svg><span class="abs" style="left:25.20px;top:14.26px;font-size:18.6px;line-height:18.6px;color:#444;letter-spacing:0.259px">42276</span></div><div class="c" style="left:250px;top:503px;width:273px;height:46px;background:#f7f7f7;"><span class="abs" style="left:6.60px;top:14.26px;font-size:18.6px;line-height:18.6px;color:#444;letter-spacing:0.314px">Maya Tunic - WT01</span></div><div class="c" style="left:523px;top:503px;width:109px;height:46px;background:#f7f7f7;"><span class="abs" style="left:7.10px;top:14.26px;font-size:18.6px;line-height:18.6px;color:#444;letter-spacing:-0.449px">WT01</span></div><div class="c" style="left:632px;top:503px;width:305px;height:46px;background:#f7f7f7;"><span class="btn" style="left:7px;top:10px"><svg class="ic" style="left:-1px;top:-1px" width="48" height="27" viewBox="0 0 48 27" fill="none" stroke="#3a3a3a" stroke-width="1.500" stroke-linecap="round"><path d="M26.300 7.400H17.800a2.300 2.300 0 0 0-2.300 2.300v7.800a2.300 2.300 0 0 0 2.300 2.300h8a2.300 2.300 0 0 0 2.300-2.300V15.800"/><path d="M21.400 17.600L22.650 13.960 31.100 6.450 33.500 9.150 25.040 16.650z" fill="#3a3a3a" stroke="none"/><path d="M28.900 8.400l2.400 2.700" stroke="#efefef" stroke-width=".8"/></svg></span><span class="abs" style="left:64.30px;top:14.26px;font-size:18.6px;line-height:18.6px;color:#444;letter-spacing:0.384px">With abutted seams and ...</span></div><div class="c" style="left:937px;top:503px;width:248px;height:46px;background:#fff;border-top-color:#dcdcdc;"><span class="abs" style="left:7.50px;top:14.26px;font-size:18.6px;line-height:18.6px;color:#444;letter-spacing:0.483px">ai:product-categories</span><i class="dd" style="border-top-color:#b9b9b9"></i><i class="cn" style="border-top-color:#e3e3e3"></i><i class="lav"></i></div><div class="c" style="left:1185px;top:503px;width:262px;height:46px;background:#f7f7f7;"><span class="abs" style="left:7.30px;top:14.26px;font-size:18.6px;line-height:18.6px;color:#444;letter-spacing:0.438px">cut out detail, drawcord, m...</span><i class="dd" style="border-top-color:#e7e7e7;right:7px"></i><i class="cn"></i></div><div class="c" style="left:1447px;top:503px;width:163px;height:46px;background:#f7f7f7;"><span class="abs" style="left:7.60px;top:14.26px;font-size:18.6px;line-height:18.6px;color:#444;letter-spacing:0.261px">variable</span></div><div class="c" style="left:1610px;top:503px;width:176px;height:46px;background:#f7f7f7;"><svg class="ic" style="left:7.3px;top:13.4px" width="13.500" height="15.600" viewBox="0 0 13 15"><path d="M3.100 6.500V4.700a3.400 3.400 0 0 1 6.800 0v1.800" fill="none" stroke="#444" stroke-width="2.300"/><rect x="0.300" y="6.300" width="12.400" height="8.500" rx="1" fill="#444"/></svg></div><div class="c h" style="left:28px;top:549px;width:70px;height:45px;"><span class="abs" style="left:0;width:69px;text-align:center;top:6.7px;font-size:18.6px;line-height:18.6px;color:#444">6</span></div><div class="c" style="left:98px;top:549px;width:55px;height:45px;background:#f7f7f7;"><i class="cb" style="left:15px;top:7px"></i></div><div class="c" style="left:153px;top:549px;width:97px;height:45px;background:#f7f7f7;"><svg class="ic" style="left:6.8px;top:13.2px" width="13.500" height="15.600" viewBox="0 0 13 15"><path d="M3.100 6.500V4.700a3.400 3.400 0 0 1 6.800 0v1.800" fill="none" stroke="#444" stroke-width="2.300"/><rect x="0.300" y="6.300" width="12.400" height="8.500" rx="1" fill="#444"/></svg><span class="abs" style="left:25.20px;top:14.26px;font-size:18.6px;line-height:18.6px;color:#444;letter-spacing:0.259px">42301</span></div><div class="c" style="left:250px;top:549px;width:273px;height:45px;background:#f7f7f7;"><span class="abs" style="left:7.60px;top:14.26px;font-size:18.6px;line-height:18.6px;color:#444;letter-spacing:0.177px">Antonia Racer Tank - WT02</span></div><div class="c" style="left:523px;top:549px;width:109px;height:45px;background:#f7f7f7;"><span class="abs" style="left:7.10px;top:14.26px;font-size:18.6px;line-height:18.6px;color:#444;letter-spacing:-0.116px">WT02</span></div><div class="c" style="left:632px;top:549px;width:305px;height:45px;background:#f7f7f7;"><span class="btn" style="left:7px;top:10px"><svg class="ic" style="left:-1px;top:-1px" width="48" height="27" viewBox="0 0 48 27" fill="none" stroke="#3a3a3a" stroke-width="1.500" stroke-linecap="round"><path d="M26.300 7.400H17.800a2.300 2.300 0 0 0-2.300 2.300v7.800a2.300 2.300 0 0 0 2.300 2.300h8a2.300 2.300 0 0 0 2.300-2.300V15.800"/><path d="M21.400 17.600L22.650 13.960 31.100 6.450 33.500 9.150 25.040 16.650z" fill="#3a3a3a" stroke="none"/><path d="M28.900 8.400l2.400 2.700" stroke="#efefef" stroke-width=".8"/></svg></span><span class="abs" style="left:64.30px;top:14.26px;font-size:18.6px;line-height:18.6px;color:#444;letter-spacing:0.495px">You won't know what yo...</span></div><div class="c" style="left:937px;top:549px;width:248px;height:45px;background:#fff;border-top-color:#dcdcdc;"><span class="abs" style="left:7.50px;top:14.26px;font-size:18.6px;line-height:18.6px;color:#444;letter-spacing:0.483px">ai:product-categories</span><i class="dd" style="border-top-color:#b9b9b9"></i><i class="cn" style="border-top-color:#e3e3e3"></i><i class="lav"></i></div><div class="c" style="left:1185px;top:549px;width:262px;height:45px;background:#f7f7f7;"><span class="abs" style="left:7.30px;top:14.26px;font-size:18.6px;line-height:18.6px;color:#444;letter-spacing:0.326px">activewear, colorblock, lig...</span><i class="dd" style="border-top-color:#e7e7e7;right:7px"></i><i class="cn"></i></div><div class="c" style="left:1447px;top:549px;width:163px;height:45px;background:#f7f7f7;"><span class="abs" style="left:7.60px;top:14.26px;font-size:18.6px;line-height:18.6px;color:#444;letter-spacing:0.261px">variable</span></div><div class="c" style="left:1610px;top:549px;width:176px;height:45px;background:#f7f7f7;"><svg class="ic" style="left:7.3px;top:13.4px" width="13.500" height="15.600" viewBox="0 0 13 15"><path d="M3.100 6.500V4.700a3.400 3.400 0 0 1 6.800 0v1.800" fill="none" stroke="#444" stroke-width="2.300"/><rect x="0.300" y="6.300" width="12.400" height="8.500" rx="1" fill="#444"/></svg></div><div class="c h" style="left:28px;top:594px;width:70px;height:47px;"><span class="abs" style="left:0;width:69px;text-align:center;top:6.7px;font-size:18.6px;line-height:18.6px;color:#444">7</span></div><div class="c" style="left:98px;top:594px;width:55px;height:47px;"><i class="cb" style="left:15px;top:7px"></i></div><div class="c" style="left:153px;top:594px;width:97px;height:47px;"><svg class="ic" style="left:6.8px;top:13.2px" width="13.500" height="15.600" viewBox="0 0 13 15"><path d="M3.100 6.500V4.700a3.400 3.400 0 0 1 6.800 0v1.800" fill="none" stroke="#444" stroke-width="2.300"/><rect x="0.300" y="6.300" width="12.400" height="8.500" rx="1" fill="#444"/></svg><span class="abs" style="left:25.20px;top:15.26px;font-size:18.6px;line-height:18.6px;color:#444;letter-spacing:0.259px">42302</span></div><div class="c" style="left:250px;top:594px;width:273px;height:47px;"><span class="abs" style="left:6.60px;top:15.26px;font-size:18.6px;line-height:18.6px;color:#444;letter-spacing:0.049px">Breathe-Easy Tank - WT07</span></div><div class="c" style="left:523px;top:594px;width:109px;height:46px;"><span class="abs" style="left:7.10px;top:14.26px;font-size:18.6px;line-height:18.6px;color:#444;letter-spacing:-0.216px">WT07</span></div><div class="c" style="left:632px;top:594px;width:305px;height:46px;"><span class="btn" style="left:7px;top:10px"><svg class="ic" style="left:-1px;top:-1px" width="48" height="27" viewBox="0 0 48 27" fill="none" stroke="#3a3a3a" stroke-width="1.500" stroke-linecap="round"><path d="M26.300 7.400H17.800a2.300 2.300 0 0 0-2.300 2.300v7.800a2.300 2.300 0 0 0 2.300 2.300h8a2.300 2.300 0 0 0 2.300-2.300V15.800"/><path d="M21.400 17.600L22.650 13.960 31.100 6.450 33.500 9.150 25.040 16.650z" fill="#3a3a3a" stroke="none"/><path d="M28.900 8.400l2.400 2.700" stroke="#efefef" stroke-width=".8"/></svg></span><span class="abs" style="left:64.30px;top:14.26px;font-size:18.6px;line-height:18.6px;color:#444;letter-spacing:-0.136px">The Breathe Easy Tank is ...</span></div><div class="c" style="left:937px;top:594px;width:248px;height:46px;"><i class="dd" style="border-top-color:#e4e4e4"></i><i class="cn"></i></div><div class="c" style="left:1185px;top:594px;width:262px;height:46px;"><span class="abs" style="left:7.30px;top:14.26px;font-size:18.6px;line-height:18.6px;color:#444;letter-spacing:0.212px">athletic tank, casual wear, l...</span><i class="dd" style="border-top-color:#e7e7e7;right:7px"></i><i class="cn"></i></div><div class="c" style="left:1447px;top:594px;width:163px;height:46px;"><span class="abs" style="left:7.60px;top:14.26px;font-size:18.6px;line-height:18.6px;color:#444;letter-spacing:0.290px">variable</span></div><div class="c" style="left:1610px;top:594px;width:176px;height:46px;"><svg class="ic" style="left:7.3px;top:13.4px" width="13.500" height="15.600" viewBox="0 0 13 15"><path d="M3.100 6.500V4.700a3.400 3.400 0 0 1 6.800 0v1.800" fill="none" stroke="#444" stroke-width="2.300"/><rect x="0.300" y="6.300" width="12.400" height="8.500" rx="1" fill="#444"/></svg></div><div class="c h" style="left:28px;top:641px;width:70px;height:45px;"><span class="abs" style="left:0;width:69px;text-align:center;top:6.7px;font-size:18.6px;line-height:18.6px;color:#444">8</span></div><div class="c" style="left:98px;top:641px;width:55px;height:45px;"><i class="cb" style="left:15px;top:7px"></i></div><div class="c" style="left:153px;top:641px;width:97px;height:45px;"><svg class="ic" style="left:6.8px;top:13.2px" width="13.500" height="15.600" viewBox="0 0 13 15"><path d="M3.100 6.500V4.700a3.400 3.400 0 0 1 6.800 0v1.800" fill="none" stroke="#444" stroke-width="2.300"/><rect x="0.300" y="6.300" width="12.400" height="8.500" rx="1" fill="#444"/></svg><span class="abs" style="left:25.20px;top:14.26px;font-size:18.6px;line-height:18.6px;color:#444;letter-spacing:0.259px">42326</span></div><div class="c" style="left:250px;top:641px;width:273px;height:45px;"><span class="abs" style="left:7.60px;top:14.26px;font-size:18.6px;line-height:18.6px;color:#444;letter-spacing:0.526px">Aim Analog Watch - WT08</span></div><div class="c" style="left:523px;top:640px;width:109px;height:45px;"><span class="abs" style="left:7.10px;top:14.26px;font-size:18.6px;line-height:18.6px;color:#444;letter-spacing:-0.116px">WT08</span></div><div class="c" style="left:632px;top:640px;width:305px;height:45px;"><span class="btn" style="left:7px;top:10px"><svg class="ic" style="left:-1px;top:-1px" width="48" height="27" viewBox="0 0 48 27" fill="none" stroke="#3a3a3a" stroke-width="1.500" stroke-linecap="round"><path d="M26.300 7.400H17.800a2.300 2.300 0 0 0-2.300 2.300v7.800a2.300 2.300 0 0 0 2.300 2.300h8a2.300 2.300 0 0 0 2.300-2.300V15.800"/><path d="M21.400 17.600L22.650 13.960 31.100 6.450 33.500 9.150 25.040 16.650z" fill="#3a3a3a" stroke="none"/><path d="M28.900 8.400l2.400 2.700" stroke="#efefef" stroke-width=".8"/></svg></span><span class="abs" style="left:64.30px;top:14.26px;font-size:18.6px;line-height:18.6px;color:#444;letter-spacing:0.262px">Stay light-years ahead of...</span></div><div class="c" style="left:937px;top:640px;width:248px;height:45px;"><i class="dd" style="border-top-color:#e4e4e4"></i><i class="cn"></i></div><div class="c" style="left:1185px;top:640px;width:262px;height:45px;"><span class="abs" style="left:7.30px;top:14.26px;font-size:18.6px;line-height:18.6px;color:#444;letter-spacing:0.434px">analog watch, comfortable...</span><i class="dd" style="border-top-color:#e7e7e7;right:7px"></i><i class="cn"></i></div><div class="c" style="left:1447px;top:640px;width:163px;height:45px;"><span class="abs" style="left:6.80px;top:14.26px;font-size:18.6px;line-height:18.6px;color:#444;letter-spacing:0.502px">simple</span></div><div class="c" style="left:1610px;top:640px;width:176px;height:45px;"><svg class="ic" style="left:7.3px;top:13.4px" width="13.500" height="15.600" viewBox="0 0 13 15"><path d="M3.100 6.500V4.700a3.400 3.400 0 0 1 6.800 0v1.800" fill="none" stroke="#444" stroke-width="2.300"/><rect x="0.300" y="6.300" width="12.400" height="8.500" rx="1" fill="#444"/></svg></div><div class="c h" style="left:28px;top:686px;width:70px;height:46px;"><span class="abs" style="left:0;width:69px;text-align:center;top:6.7px;font-size:18.6px;line-height:18.6px;color:#444">9</span></div><div class="c" style="left:98px;top:686px;width:55px;height:46px;"><i class="cb" style="left:15px;top:7px"></i></div><div class="c" style="left:153px;top:686px;width:97px;height:46px;"><svg class="ic" style="left:6.8px;top:13.2px" width="13.500" height="15.600" viewBox="0 0 13 15"><path d="M3.100 6.500V4.700a3.400 3.400 0 0 1 6.800 0v1.800" fill="none" stroke="#444" stroke-width="2.300"/><rect x="0.300" y="6.300" width="12.400" height="8.500" rx="1" fill="#444"/></svg><span class="abs" style="left:25.20px;top:14.26px;font-size:18.6px;line-height:18.6px;color:#444;letter-spacing:0.259px">42327</span></div><div class="c" style="left:250px;top:686px;width:273px;height:46px;"><span class="abs" style="left:6.60px;top:14.26px;font-size:18.6px;line-height:18.6px;color:#444;letter-spacing:0.277px">Endurance Watch - WT09</span></div><div class="c" style="left:523px;top:685px;width:109px;height:46px;"><span class="abs" style="left:7.10px;top:14.26px;font-size:18.6px;line-height:18.6px;color:#444;letter-spacing:-0.116px">WT09</span></div><div class="c" style="left:632px;top:685px;width:305px;height:46px;"><span class="btn" style="left:7px;top:10px"><svg class="ic" style="left:-1px;top:-1px" width="48" height="27" viewBox="0 0 48 27" fill="none" stroke="#3a3a3a" stroke-width="1.500" stroke-linecap="round"><path d="M26.300 7.400H17.800a2.300 2.300 0 0 0-2.300 2.300v7.800a2.300 2.300 0 0 0 2.300 2.300h8a2.300 2.300 0 0 0 2.300-2.300V15.800"/><path d="M21.400 17.600L22.650 13.960 31.100 6.450 33.500 9.150 25.040 16.650z" fill="#3a3a3a" stroke="none"/><path d="M28.900 8.400l2.400 2.700" stroke="#efefef" stroke-width=".8"/></svg></span><span class="abs" style="left:63.30px;top:14.26px;font-size:18.6px;line-height:18.6px;color:#444;letter-spacing:0.360px">It's easy to track and mo...</span></div><div class="c" style="left:937px;top:685px;width:248px;height:46px;"><i class="dd" style="border-top-color:#e4e4e4"></i><i class="cn"></i></div><div class="c" style="left:1185px;top:685px;width:262px;height:46px;"><span class="abs" style="left:7.30px;top:14.26px;font-size:18.6px;line-height:18.6px;color:#444;letter-spacing:0.276px">adjustable strap, fitness tra...</span><i class="dd" style="border-top-color:#e7e7e7;right:7px"></i><i class="cn"></i></div><div class="c" style="left:1447px;top:685px;width:163px;height:46px;"><span class="abs" style="left:6.80px;top:14.26px;font-size:18.6px;line-height:18.6px;color:#444;letter-spacing:0.502px">simple</span></div><div class="c" style="left:1610px;top:685px;width:176px;height:46px;"><svg class="ic" style="left:7.3px;top:13.4px" width="13.500" height="15.600" viewBox="0 0 13 15"><path d="M3.100 6.500V4.700a3.400 3.400 0 0 1 6.800 0v1.800" fill="none" stroke="#444" stroke-width="2.300"/><rect x="0.300" y="6.300" width="12.400" height="8.500" rx="1" fill="#444"/></svg></div><div class="c h" style="left:28px;top:732px;width:70px;height:46px;"><span class="abs" style="left:0;width:69px;text-align:center;top:6.7px;font-size:18.6px;line-height:18.6px;color:#444">10</span></div><div class="c" style="left:98px;top:732px;width:55px;height:46px;"><i class="cb" style="left:15px;top:7px"></i></div><div class="c" style="left:153px;top:732px;width:97px;height:46px;"><svg class="ic" style="left:6.8px;top:13.2px" width="13.500" height="15.600" viewBox="0 0 13 15"><path d="M3.100 6.500V4.700a3.400 3.400 0 0 1 6.800 0v1.800" fill="none" stroke="#444" stroke-width="2.300"/><rect x="0.300" y="6.300" width="12.400" height="8.500" rx="1" fill="#444"/></svg><span class="abs" style="left:25.20px;top:14.26px;font-size:18.6px;line-height:18.6px;color:#444;letter-spacing:0.259px">42328</span></div><div class="c" style="left:250px;top:732px;width:273px;height:46px;"><span class="abs" style="left:7.60px;top:14.26px;font-size:18.6px;line-height:18.6px;color:#444;letter-spacing:0.441px">Summit Watch - WT10</span></div><div class="c" style="left:523px;top:731px;width:109px;height:46px;"><span class="abs" style="left:7.10px;top:14.26px;font-size:18.6px;line-height:18.6px;color:#444;letter-spacing:-0.116px">WT10</span></div><div class="c" style="left:632px;top:731px;width:305px;height:46px;"><span class="btn" style="left:7px;top:10px"><svg class="ic" style="left:-1px;top:-1px" width="48" height="27" viewBox="0 0 48 27" fill="none" stroke="#3a3a3a" stroke-width="1.500" stroke-linecap="round"><path d="M26.300 7.400H17.800a2.300 2.300 0 0 0-2.300 2.300v7.800a2.300 2.300 0 0 0 2.300 2.300h8a2.300 2.300 0 0 0 2.300-2.300V15.800"/><path d="M21.400 17.600L22.650 13.960 31.100 6.450 33.500 9.150 25.040 16.650z" fill="#3a3a3a" stroke="none"/><path d="M28.900 8.400l2.400 2.700" stroke="#efefef" stroke-width=".8"/></svg></span><span class="abs" style="left:64.30px;top:14.26px;font-size:18.6px;line-height:18.6px;color:#444;letter-spacing:0.370px">Trek high and low in the ...</span></div><div class="c" style="left:937px;top:731px;width:248px;height:46px;"><i class="dd" style="border-top-color:#e4e4e4"></i><i class="cn"></i></div><div class="c" style="left:1185px;top:731px;width:262px;height:46px;"><span class="abs" style="left:6.30px;top:14.26px;font-size:18.6px;line-height:18.6px;color:#444;letter-spacing:0.472px">brushed metal, digital wat...</span><i class="dd" style="border-top-color:#e7e7e7;right:7px"></i><i class="cn"></i></div><div class="c" style="left:1447px;top:731px;width:163px;height:46px;"><span class="abs" style="left:6.80px;top:14.26px;font-size:18.6px;line-height:18.6px;color:#444;letter-spacing:0.502px">simple</span></div><div class="c" style="left:1610px;top:731px;width:176px;height:46px;"><svg class="ic" style="left:7.3px;top:13.4px" width="13.500" height="15.600" viewBox="0 0 13 15"><path d="M3.100 6.500V4.700a3.400 3.400 0 0 1 6.800 0v1.800" fill="none" stroke="#444" stroke-width="2.300"/><rect x="0.300" y="6.300" width="12.400" height="8.500" rx="1" fill="#444"/></svg></div><div class="c h" style="left:28px;top:778px;width:70px;height:46px;"><span class="abs" style="left:0;width:69px;text-align:center;top:6.7px;font-size:18.6px;line-height:18.6px;color:#444">11</span></div><div class="c" style="left:98px;top:778px;width:55px;height:46px;"><i class="cb" style="left:15px;top:7px"></i></div><div class="c" style="left:153px;top:778px;width:97px;height:46px;"><svg class="ic" style="left:6.8px;top:13.2px" width="13.500" height="15.600" viewBox="0 0 13 15"><path d="M3.100 6.500V4.700a3.400 3.400 0 0 1 6.800 0v1.800" fill="none" stroke="#444" stroke-width="2.300"/><rect x="0.300" y="6.300" width="12.400" height="8.500" rx="1" fill="#444"/></svg><span class="abs" style="left:25.20px;top:14.26px;font-size:18.6px;line-height:18.6px;color:#444;letter-spacing:0.259px">42329</span></div><div class="c" style="left:250px;top:778px;width:273px;height:46px;"><span class="abs" style="left:7.60px;top:14.26px;font-size:18.6px;line-height:18.6px;color:#444;letter-spacing:0.316px">Cruise Dual Analog Watch - ...</span></div><div class="c" style="left:523px;top:777px;width:109px;height:46px;"><span class="abs" style="left:7.10px;top:14.26px;font-size:18.6px;line-height:18.6px;color:#444;letter-spacing:-0.056px">WT11</span></div><div class="c" style="left:632px;top:777px;width:305px;height:46px;"><span class="btn" style="left:7px;top:10px"><svg class="ic" style="left:-1px;top:-1px" width="48" height="27" viewBox="0 0 48 27" fill="none" stroke="#3a3a3a" stroke-width="1.500" stroke-linecap="round"><path d="M26.300 7.400H17.800a2.300 2.300 0 0 0-2.300 2.300v7.800a2.300 2.300 0 0 0 2.300 2.300h8a2.300 2.300 0 0 0 2.300-2.300V15.800"/><path d="M21.400 17.600L22.650 13.960 31.100 6.450 33.500 9.150 25.040 16.650z" fill="#3a3a3a" stroke="none"/><path d="M28.900 8.400l2.400 2.700" stroke="#efefef" stroke-width=".8"/></svg></span><span class="abs" style="left:64.30px;top:14.26px;font-size:18.6px;line-height:18.6px;color:#444;letter-spacing:0.478px">Whether you're traveling...</span></div><div class="c" style="left:937px;top:777px;width:248px;height:46px;"><i class="dd" style="border-top-color:#e4e4e4"></i><i class="cn"></i></div><div class="c" style="left:1185px;top:777px;width:262px;height:46px;"><span class="abs" style="left:7.30px;top:14.26px;font-size:18.6px;line-height:18.6px;color:#444;letter-spacing:0.413px">adjustable fit, dual time zo...</span><i class="dd" style="border-top-color:#e7e7e7;right:7px"></i><i class="cn"></i></div><div class="c" style="left:1447px;top:777px;width:163px;height:46px;"><span class="abs" style="left:6.80px;top:14.26px;font-size:18.6px;line-height:18.6px;color:#444;letter-spacing:0.502px">simple</span></div><div class="c" style="left:1610px;top:777px;width:176px;height:46px;"><svg class="ic" style="left:7.3px;top:13.4px" width="13.500" height="15.600" viewBox="0 0 13 15"><path d="M3.100 6.500V4.700a3.400 3.400 0 0 1 6.800 0v1.800" fill="none" stroke="#444" stroke-width="2.300"/><rect x="0.300" y="6.300" width="12.400" height="8.500" rx="1" fill="#444"/></svg></div><div class="c h" style="left:28px;top:824px;width:70px;height:46px;"><span class="abs" style="left:0;width:69px;text-align:center;top:6.7px;font-size:18.6px;line-height:18.6px;color:#444">12</span></div><div class="c" style="left:98px;top:824px;width:55px;height:46px;"><i class="cb" style="left:15px;top:7px"></i></div><div class="c" style="left:153px;top:824px;width:97px;height:46px;"><svg class="ic" style="left:6.8px;top:13.2px" width="13.500" height="15.600" viewBox="0 0 13 15"><path d="M3.100 6.500V4.700a3.400 3.400 0 0 1 6.800 0v1.800" fill="none" stroke="#444" stroke-width="2.300"/><rect x="0.300" y="6.300" width="12.400" height="8.500" rx="1" fill="#444"/></svg><span class="abs" style="left:25.20px;top:13.26px;font-size:18.6px;line-height:18.6px;color:#444;letter-spacing:0.259px">42330</span></div><div class="c" style="left:250px;top:824px;width:273px;height:46px;"><span class="abs" style="left:6.60px;top:13.26px;font-size:18.6px;line-height:18.6px;color:#444;letter-spacing:0.384px">Dash Digital Watch - WT12</span></div><div class="c" style="left:523px;top:823px;width:109px;height:46px;"><span class="abs" style="left:7.10px;top:13.26px;font-size:18.6px;line-height:18.6px;color:#444;letter-spacing:-0.116px">WT12</span></div><div class="c" style="left:632px;top:823px;width:305px;height:46px;"><span class="btn" style="left:7px;top:10px"><svg class="ic" style="left:-1px;top:-1px" width="48" height="27" viewBox="0 0 48 27" fill="none" stroke="#3a3a3a" stroke-width="1.500" stroke-linecap="round"><path d="M26.300 7.400H17.800a2.300 2.300 0 0 0-2.300 2.300v7.800a2.300 2.300 0 0 0 2.300 2.300h8a2.300 2.300 0 0 0 2.300-2.300V15.800"/><path d="M21.400 17.600L22.650 13.960 31.100 6.450 33.500 9.150 25.040 16.650z" fill="#3a3a3a" stroke="none"/><path d="M28.900 8.400l2.400 2.700" stroke="#efefef" stroke-width=".8"/></svg></span><span class="abs" style="left:64.30px;top:13.26px;font-size:18.6px;line-height:18.6px;color:#444;letter-spacing:0.219px">The Dash Digital Watch ...</span></div><div class="c" style="left:937px;top:823px;width:248px;height:46px;"><i class="dd" style="border-top-color:#e4e4e4"></i><i class="cn"></i></div><div class="c" style="left:1185px;top:823px;width:262px;height:46px;"><span class="abs" style="left:7.30px;top:13.26px;font-size:18.6px;line-height:18.6px;color:#444;letter-spacing:0.354px">durable rubber, fitness trac...</span><i class="dd" style="border-top-color:#e7e7e7;right:7px"></i><i class="cn"></i></div><div class="c" style="left:1447px;top:823px;width:163px;height:46px;"><span class="abs" style="left:6.80px;top:13.26px;font-size:18.6px;line-height:18.6px;color:#444;letter-spacing:0.502px">simple</span></div><div class="c" style="left:1610px;top:823px;width:176px;height:46px;"><svg class="ic" style="left:7.3px;top:13.4px" width="13.500" height="15.600" viewBox="0 0 13 15"><path d="M3.100 6.500V4.700a3.400 3.400 0 0 1 6.800 0v1.800" fill="none" stroke="#444" stroke-width="2.300"/><rect x="0.300" y="6.300" width="12.400" height="8.500" rx="1" fill="#444"/></svg></div><div class="abs" style="left:941.5px;top:409.6px;width:239.500px;height:2px;background:#5b72c8"></div><div class="abs" style="left:934.3px;top:360.6px;width:254.500px;height:236px;border:5.700px solid #f60000;box-shadow:0 0 0 2.500px rgba(255,255,255,.9)"></div></div>
</div>
<div id="vs"><i style="position:absolute;left:3px;top:5px;border-left:4.500px solid transparent;border-right:4.500px solid transparent;border-bottom:6px solid #9f9f9f"></i><i style="position:absolute;left:3px;top:18px;width:9px;height:550px;background:#9f9f9f;border-radius:4.500px"></i><i style="position:absolute;left:3px;top:891px;border-left:4.500px solid transparent;border-right:4.500px solid transparent;border-top:6px solid #9f9f9f"></i></div><div id="hs"><i style="position:absolute;left:5px;top:3px;border-top:4.500px solid transparent;border-bottom:4.500px solid transparent;border-right:6px solid #9f9f9f"></i><i style="position:absolute;left:18px;top:3px;width:291px;height:9px;background:#9f9f9f;border-radius:4.500px"></i><i style="position:absolute;left:1893.500px;top:3px;border-top:4.500px solid transparent;border-bottom:4.500px solid transparent;border-left:6px solid #9f9f9f"></i></div>
</body></html>
